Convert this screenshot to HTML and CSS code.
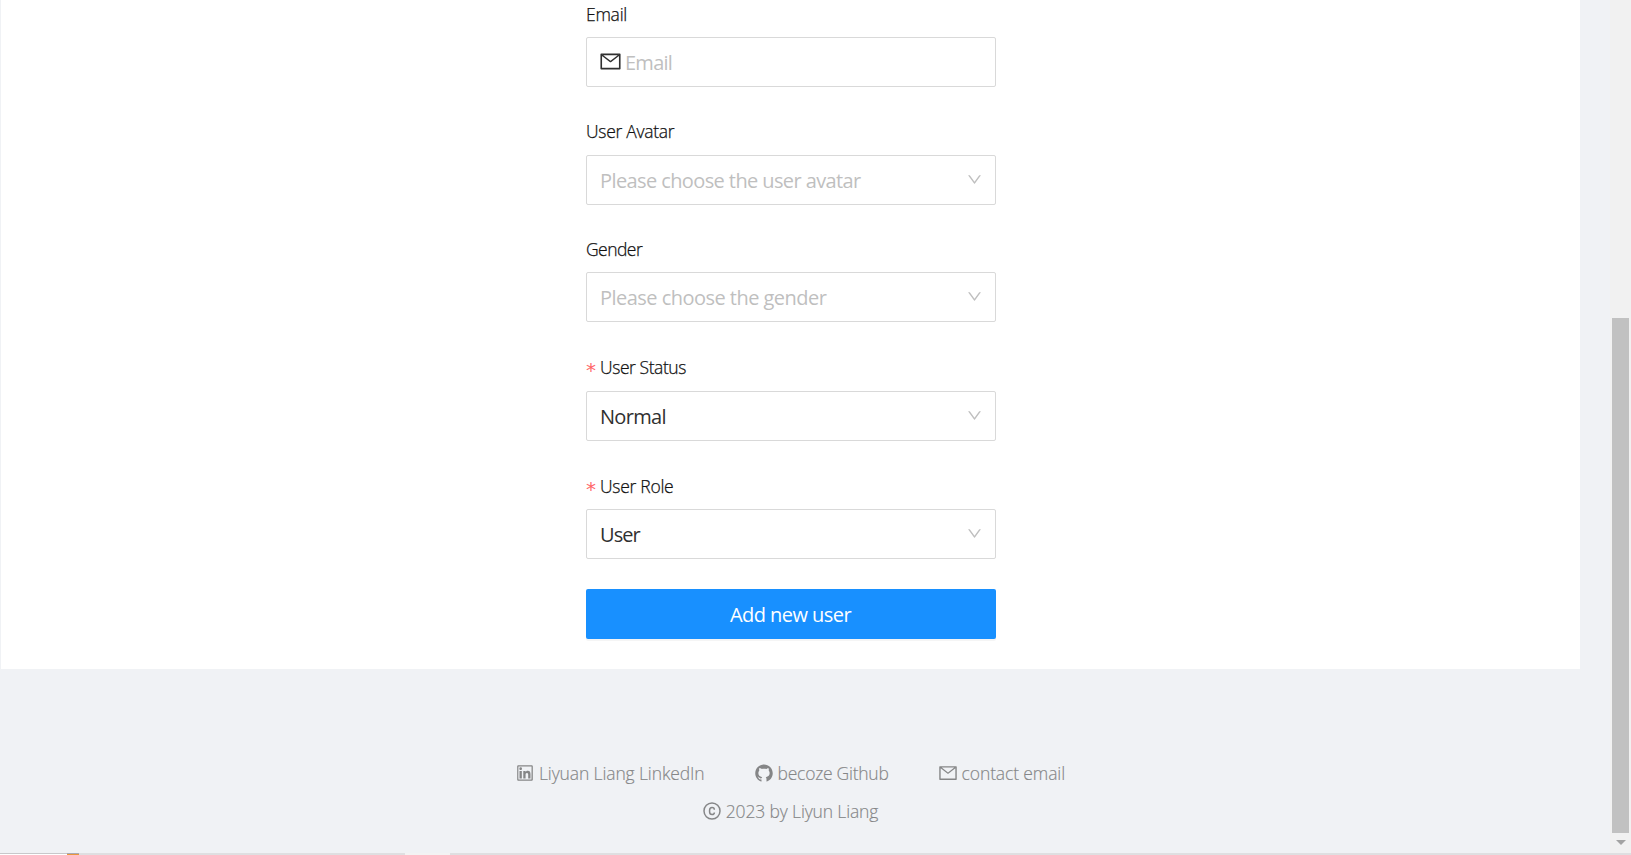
FILE: index.html
```html
<!DOCTYPE html>
<html lang="en">
<head>
<meta charset="utf-8">
<title>Add user</title>
<link rel="stylesheet" href="styles.css">
</head>
<body>
<svg class="sprite" width="0" height="0">
  <symbol id="mail" viewBox="0 0 1024 1024"><path d="M928 160H96c-17.700 0-32 14.300-32 32v640c0 17.700 14.300 32 32 32h832c17.700 0 32-14.300 32-32V192c0-17.700-14.300-32-32-32zm-40 110.800V792H136V270.800l-27.600-21.500 39.300-50.500 42.800 33.300h643.100l42.800-33.300 39.300 50.500-27.700 21.500zM833.600 232L512 482 190.400 232l-42.800-33.300-39.300 50.500 27.600 21.500 341.600 265.600a55.990 55.990 0 0 0 68.700 0L888 270.800l27.600-21.500-39.300-50.500-42.700 33.200z"/></symbol>
  <symbol id="down" viewBox="0 0 1024 1024"><path d="M884 256h-75c-5.100 0-9.900 2.500-12.900 6.600L512 654.200 227.900 262.600c-3-4.100-7.800-6.600-12.900-6.600h-75c-6.500 0-10.300 7.400-6.500 12.700l352.600 486.100c12.800 17.600 39 17.600 51.700 0l352.600-486.100c3.900-5.300.1-12.700-6.400-12.700z"/></symbol>
  <symbol id="linkedin" viewBox="0 0 1024 1024"><path d="M847.700 112H176.300c-35.500 0-64.300 28.800-64.300 64.300v671.400c0 35.500 28.800 64.300 64.300 64.300h671.400c35.500 0 64.300-28.800 64.300-64.300V176.300c0-35.500-28.800-64.300-64.300-64.300zm0 736c-447.800-.1-671.700-.2-671.700-.3.100-447.800.2-671.700.3-671.700 447.800.1 671.700.2 671.700.3-.1 447.800-.2 671.700-.3 671.700zM230.600 411.900h118.700v381.800H230.600zm59.400-52.200c37.900 0 68.800-30.800 68.800-68.800a68.800 68.800 0 1 0-137.600 0c-.1 38 30.700 68.800 68.800 68.800zm252.300 245.100c0-49.800 9.500-98 71.200-98 60.800 0 61.700 56.900 61.700 101.200v185.700h118.600V584.300c0-102.800-22.200-181.900-142.300-181.900-57.700 0-96.400 31.700-112.300 61.700h-1.600v-52.200H423.700v381.800h118.600V604.800z"/></symbol>
  <symbol id="github" viewBox="0 0 1024 1024"><path d="M511.600 76.300C264.300 76.200 64 276.400 64 523.500 64 718.900 189.300 885 363.800 946c23.500 5.900 19.900-10.800 19.900-22.200v-77.500c-135.700 15.900-141.200-73.900-150.300-88.900C215 726 171.500 718 184.500 703c30.900-15.900 62.400 4 98.900 57.900 26.400 39.100 77.900 32.500 104 26 5.700-23.500 17.900-44.500 34.700-60.800-140.600-25.200-199.200-111-199.200-213 0-49.500 16.300-95 48.300-131.700-20.400-60.500 1.900-112.300 4.900-120 58.100-5.200 118.500 41.600 123.200 45.300 33-8.900 70.700-13.600 112.900-13.600 42.400 0 80.200 4.900 113.500 13.900 11.300-8.600 67.300-48.800 121.300-43.900 2.900 7.700 24.700 58.300 5.500 118 32.400 36.800 48.900 82.700 48.900 132.300 0 102.200-59 188.100-200 212.900a127.500 127.500 0 0 1 38.100 91v112.500c.8 9 0 17.900 15 17.900 177.100-59.700 304.600-227 304.600-424.100 0-247.200-200.400-447.300-447.500-447.300z"/></symbol>
  <symbol id="copyright" viewBox="0 0 1024 1024"><g fill="none" stroke="currentColor" stroke-width="76"><circle cx="512" cy="512" r="410"/><path d="M633 444c0-74-44-113-119-113-82 0-126 55-126 145v72c0 90 44 145 126 145 75 0 119-38 119-107"/></g></symbol>
</svg>
<div class="view">
  <div class="page">
    <main class="card">
      <form class="form">
        <div class="item i1">
          <label class="label"><span class="t-email">Email</span></label>
          <div class="control"><svg class="prefix"><use href="#mail"/></svg><span class="hint v-email">Email</span></div>
        </div>
        <div class="item i2">
          <label class="label"><span class="t-avatar">User Avatar</span></label>
          <div class="control select"><span class="hint v-avatar">Please choose the user avatar</span><svg class="arrow"><use href="#down"/></svg></div>
        </div>
        <div class="item">
          <label class="label"><span class="t-gender">Gender</span></label>
          <div class="control select"><span class="hint v-gender">Please choose the gender</span><svg class="arrow"><use href="#down"/></svg></div>
        </div>
        <div class="item i4">
          <label class="label"><span class="star">*</span><span class="t-status">User Status</span></label>
          <div class="control select"><span class="v-normal">Normal</span><svg class="arrow"><use href="#down"/></svg></div>
        </div>
        <div class="item">
          <label class="label"><span class="star">*</span><span class="t-role">User Role</span></label>
          <div class="control select"><span class="v-user">User</span><svg class="arrow"><use href="#down"/></svg></div>
        </div>
        <button class="submit" type="button"><span class="t-add">Add new user</span></button>
      </form>
    </main>
    <footer class="footer">
      <div class="links">
        <a class="link"><svg><use href="#linkedin"/></svg><span class="l-in">Liyuan Liang LinkedIn</span></a>
        <a class="link"><svg><use href="#github"/></svg><span class="l-git">becoze Github</span></a>
        <a class="link"><svg><use href="#mail"/></svg><span class="l-mail">contact email</span></a>
      </div>
      <div class="link copy"><svg><use href="#copyright"/></svg><span class="l-copy">2023 by Liyun Liang</span></div>
    </footer>
  </div>
  <div class="scrollbar"><div class="thumb"></div><div class="tip"></div></div>
</div>
<div class="edge"><i class="e1"></i><i class="e2"></i><i class="e3"></i><i class="e4"></i><i class="e5"></i></div>
</body>
</html>
```
FILE: styles.css
```css
* { box-sizing: border-box; }
body { margin: 0; width: 1631px; height: 855px; overflow: hidden; background: #f0f2f5; font-family: "Open Sans", "Noto Sans", sans-serif; color: #303030; }
.sprite { display: none; }
svg { fill: currentColor; flex: none; display: block; }
.view { display: flex; height: 853px; }
.page { flex: 1; min-width: 0; }
.card { width: 1579px; height: 669px; margin-left: 1px; background: #fff; overflow: hidden; }
.form { width: 410px; margin: -1px 0 0 585px; }
.item { height: 118px; }
.i1 { height: 117px; }
.i4 { height: 119px; }
.label { display: flex; align-items: center; height: 30px; margin-bottom: 8px; font-size: 17.500px; font-weight: 300; -webkit-text-stroke: .25px currentColor; white-space: nowrap; color: #111; }
.i2 .label, .i4 .label { margin-bottom: 9px; }
.star { color: #ff6769; width: 14px; font: 400 20px/30px "DejaVu Sans", sans-serif; padding-top: 5px; -webkit-text-stroke: 0; }
.control { display: flex; align-items: center; height: 50px; border: 1px solid #d9d9d9; border-radius: 2px; padding: 0 11.500px; font-size: 20px; white-space: nowrap; }
.select { justify-content: space-between; padding: 0 12px 0 13px; }
.hint { color: #bfbfbf; }
.prefix { width: 23px; height: 23px; margin-right: 3.500px; margin-bottom: 1px; }
.arrow { width: 17px; height: 17px; color: #bfbfbf; margin-bottom: 1px; }
.submit { display: flex; align-items: center; justify-content: center; width: 410px; height: 50px; border: 0; border-radius: 2px; background: #1890ff; color: #fff; font: 400 20px "Open Sans", sans-serif; box-shadow: 0 2px 0 rgba(0,0,0,.04); white-space: nowrap; }
.t-email { letter-spacing: -.25px; }
.t-avatar { letter-spacing: -.3px; }
.t-gender { letter-spacing: -.55px; }
.t-status { letter-spacing: -.43px; }
.t-role { letter-spacing: -.28px; }
.v-email { letter-spacing: -.75px; }
.v-avatar { letter-spacing: -.6px; }
.v-gender { letter-spacing: -.53px; }
.v-normal { letter-spacing: -.7px; }
.v-user { letter-spacing: -.95px; }
.t-add { letter-spacing: -.54px; margin-right: 1px; }
.footer { padding-top: 89px; margin-left: 1px; width: 1578px; color: #858687; font-size: 17.500px; font-weight: 300; -webkit-text-stroke: .15px currentColor; }
.links { display: flex; justify-content: center; gap: 49px; height: 30px; }
.link { display: flex; align-items: center; gap: 4px; white-space: nowrap; height: 30px; }
.link svg { width: 20px; height: 20px; -webkit-text-stroke: 0; }
.copy { justify-content: center; margin-top: 8px; }
.l-in { letter-spacing: -.12px; }
.l-git { letter-spacing: -.26px; }
.l-mail { letter-spacing: -.12px; }
.l-copy { letter-spacing: -.15px; }
.scrollbar { width: 21px; background: #f1f1f1; display: flex; flex-direction: column; align-items: center; padding-top: 318px; }
.thumb { width: 17px; height: 515px; background: #c1c1c1; }
.tip { margin-top: 7px; border: 5px solid transparent; border-top-color: #a3a3a3; border-bottom: 0; }
.edge { display: flex; height: 2px; background: #dfdfe1; }
.e1 { width: 62px; background: #fff; border-top: 1px solid #c8c8ca; }
.e2 { width: 5px; background: #fff; border-top: 1px solid #c8c8ca; }
.e3 { width: 12px; background: #e8973c; border-top: 1px solid #a9a9b4; }
.e4 { width: 326px; }
.e5 { width: 45px; background: #f3f3f3; }
```
